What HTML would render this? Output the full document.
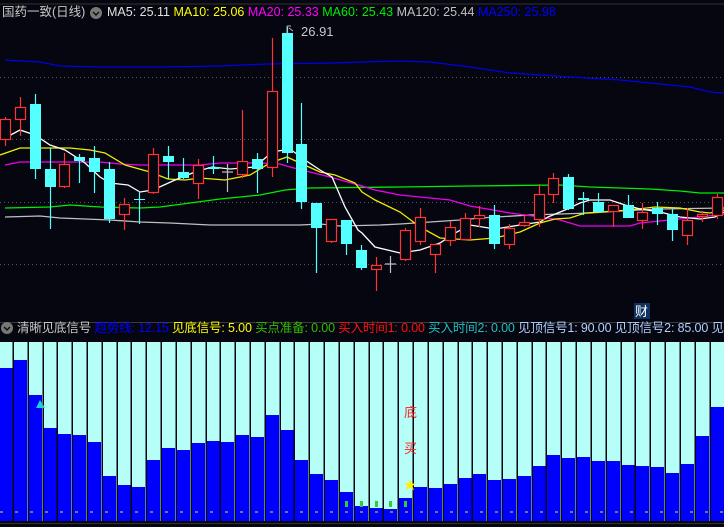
<!DOCTYPE html>
<html><head><meta charset="utf-8"><style>
html,body{margin:0;padding:0;background:#05060f;width:724px;height:527px;overflow:hidden;font-family:"Liberation Sans","Noto Sans CJK SC",sans-serif;}
.w{position:absolute;left:0;top:0;width:724px;height:527px;overflow:hidden;}
.t{position:absolute;font-size:12.5px;white-space:nowrap;line-height:15px;}
</style></head><body>
<div class="w">
<svg width="724" height="527" style="position:absolute;left:0;top:0" xmlns="http://www.w3.org/2000/svg">
<rect width="724" height="527" fill="#05060f"/>
<line x1="0" y1="4" x2="724" y2="4" stroke="#333" stroke-width="1"/>
<g stroke="#555" stroke-dasharray="1,3"><line x1="0" y1="77.5" x2="724" y2="77.5"/><line x1="0" y1="139.5" x2="724" y2="139.5"/><line x1="0" y1="202.5" x2="724" y2="202.5"/><line x1="0" y1="264.5" x2="724" y2="264.5"/></g>
<g fill="none" stroke-width="1.3">
<polyline stroke="#0000ee" points="5,60 40,62 60,66 100,67 160,67 220,66 267,64 333,63 362,62 400,61 430,62 470,67 510,73 570,77 620,80 650,83 690,87 710,92 724,93"/>
<polyline stroke="#c0c0c0" points="5,217 40,216 60,218 110,220 140,222 170,223 210,225 300,225 320,224 340,226 380,225 400,224 430,222 460,220 480,218 530,215 590,213 620,211 660,209 724,208"/>
<polyline stroke="#00ee00" points="5,208 50,207 70,205 100,207 140,208 160,207 190,203 220,199 260,195 285,190 310,188 400,187 470,186 560,185 590,187 620,188 650,189 680,191 700,193 724,193"/>
<polyline stroke="#ee00ee" points="5,165 20,162 100,162 120,164 140,165 200,165 220,163 260,163 280,164 290,167 310,172 330,177 362,186 375,190 400,195 450,200 470,206 510,213 540,217 560,220 580,226 630,226 640,223 670,220 700,217 724,214"/>
<polyline stroke="#eeee00" points="0,155 20,148 70,148 90,150 105,153 125,165 150,172 168,179 185,180 200,178 225,180 250,175 270,163 287,157 300,163 320,172 335,175 355,183 362,192 375,200 400,212 420,227 440,238 470,240 495,238 520,232 540,223 555,219 570,218 585,213 600,212 630,210 655,207 680,208 700,212 710,213 724,210"/>
<polyline stroke="#ffffff" points="5,138 20,130 35,135 50,145 65,150 85,163 100,177 110,183 128,185 140,192 153,190 175,180 195,172 212,167 230,169 255,167 272,152 290,149 305,160 320,170 332,177 345,207 358,230 362,233 375,247 400,253 420,250 440,243 455,233 470,225 495,229 520,225 540,222 548,217 565,210 580,203 590,200 610,200 625,205 640,209 660,212 680,217 700,219 715,217 724,212"/>
</g>
<g id="c" stroke-width="1.2"></g>
<rect x="0" y="322" width="724" height="1" fill="#3a3a3a"/>
<rect x="0" y="342" width="724" height="180" fill="#b6fff8"/>
<g id="b" fill="#0000ff"></g>
<rect x="0" y="521" width="724" height="6" fill="#05060f"/>
<line x1="0" y1="523.5" x2="724" y2="523.5" stroke="#333"/>
<polygon points="40,400 36,408 45,408" fill="#20d0d0"/>
<polygon points="410,479 411.5,483.5 416,483.5 412.5,486 414,490.5 410,487.5 406,490.5 407.5,486 404,483.5 408.5,483.5" fill="#ffee00"/>
<text x="404" y="417" fill="#ff2020" font-size="13" font-family="Noto Sans CJK SC,sans-serif">底</text>
<text x="404" y="453" fill="#ff2020" font-size="13" font-family="Noto Sans CJK SC,sans-serif">买</text>
<rect x="634" y="303" width="16" height="16" fill="#103060"/>
<text x="635" y="316" fill="#ffffff" font-size="13" font-family="Noto Sans CJK SC,sans-serif">财</text>
<circle cx="96" cy="13" r="6" fill="#777"/><path d="M93,12 L96,15 L99,12" stroke="#111" fill="none" stroke-width="1.5"/>
<circle cx="7" cy="328" r="6" fill="#777"/><path d="M4,327 L7,330 L10,327" stroke="#111" fill="none" stroke-width="1.5"/>
<path d="M287,34 V26 M287,26 h4 M289,28 l4,3" stroke="#bbb" fill="none"/>
<text x="301" y="36" fill="#c8c8c8" font-size="13" font-family="Liberation Sans,sans-serif">26.91</text>
</svg>
<script>
var C=[[5,'r',119,139,117,146],[20,'r',107,119,97,136],[35,'c',104,169,94,179],[50,'c',169,187,148,229],[64,'r',164,186,153,188],[79,'c',157,161,154,183],[94,'c',158,172,146,193],[109,'c',169,219,162,223],[124,'r',204,214,198,230],[139,'c',199,200,191,224],[153,'r',154,192,148,194],[168,'c',156,162,146,179],[183,'c',172,178,158,179],[198,'r',165,183,159,199],[213,'c',167,169,156,174],[227,'g',172,173,164,192],[242,'r',161,174,110,178],[257,'c',159,169,153,193],[272,'r',91,167,38,177],[287,'c',33,153,27,163],[301,'c',144,202,103,209],[316,'c',203,228,203,273],[331,'r',219,241,219,243],[346,'c',220,244,220,255],[361,'c',250,268,245,270],[376,'r',265,269,257,291],[390,'g',264,265,256,273],[405,'r',230,259,228,261],[420,'r',217,241,208,245],[435,'r',244,254,244,273],[450,'r',227,240,221,246],[465,'r',218,239,213,239],[479,'r',215,218,206,227],[494,'c',215,244,205,249],[509,'r',228,244,224,249],[524,'r',222,225,214,227],[539,'r',194,219,184,227],[553,'r',178,194,173,203],[568,'c',177,209,174,210],[583,'c',198,200,192,215],[598,'c',202,212,193,212],[613,'r',205,211,205,227],[628,'c',205,218,195,218],[642,'r',212,220,203,229],[657,'c',208,214,202,225],[672,'c',214,230,209,241],[687,'r',220,235,208,245],[702,'r',214,216,211,222],[717,'r',197,215,194,219]];
var s='';C.forEach(function(k){var x=k[0],col=k[1]=='r'?'#ff3333':k[1]=='c'?'#54ffff':'#c0c0c0';
s+='<line x1="'+(x+.5)+'" y1="'+k[4]+'" x2="'+(x+.5)+'" y2="'+k[5]+'" stroke="'+col+'"/>';
if(k[1]=='r')s+='<rect x="'+(x-4.5)+'" y="'+(k[2]+.5)+'" width="10" height="'+Math.max(1,k[3]-k[2])+'" fill="#05060f" stroke="'+col+'"/>';
else if(k[1]=='c')s+='<rect x="'+(x-5)+'" y="'+k[2]+'" width="11" height="'+Math.max(1,k[3]-k[2])+'" fill="'+col+'"/>';
else s+='<line x1="'+(x-5)+'" y1="'+k[2]+'" x2="'+(x+6)+'" y2="'+k[2]+'" stroke="'+col+'"/>';});
document.getElementById('c').innerHTML=s;
var T=[368,360,395,428,434,435,442,476,485,487,460,448,450,443,441,442,435,437,415,430,460,474,480,492,506,508,509,498,487,488,484,478,474,480,479,476,466,455,458,457,461,461,465,466,467,473,464,436,407];
var X=[0,14,29,44,58,73,88,103,118,132,147,162,177,192,207,221,236,251,266,281,295,310,325,340,355,370,384,399,414,429,444,459,473,488,503,518,533,547,562,577,592,607,622,636,651,666,681,696,711];
var b='';X.forEach(function(x,i){b+='<rect x="'+x+'" y="'+T[i]+'" width="13" height="'+(521-T[i])+'"/>';});
for(var i=1;i<X.length;i++){b+='<rect x="'+(X[i]-1.5)+'" y="342" width="1.5" height="179" fill="#05060f"/>';}
b+='<line x1="0" y1="512" x2="724" y2="512" stroke="#eeee00" stroke-dasharray="3,12"/>';
[340,355,370,384,399].forEach(function(x){b+='<rect x="'+(x+5)+'" y="501" width="3" height="6" fill="#33cc33"/>';});
document.getElementById('b').innerHTML=b;
</script>
<div class="t" style="left:2px;top:5px;color:#c8c8c8">国药一致(日线)</div>
<div class="t" style="left:107px;top:5px"><span style="color:#e0e0e0">MA5: 25.11</span> <span style="color:#ffff00">MA10: 25.06</span> <span style="color:#ff00ff">MA20: 25.33</span> <span style="color:#00ee00">MA60: 25.43</span> <span style="color:#c0c0c0">MA120: 25.44</span> <span style="color:#0000ff">MA250: 25.98</span></div>
<div class="t" style="left:17px;top:321px;letter-spacing:-0.15px"><span style="color:#c8c8c8">清晰见底信号</span> <span style="color:#0000ff">趋势线: 12.15</span> <span style="color:#ffff00">见底信号: 5.00</span> <span style="color:#33bb00">买点准备: 0.00</span> <span style="color:#ff1010">买入时间1: 0.00</span> <span style="color:#20c0c0">买入时间2: 0.00</span> <span style="color:#b0d0ff">见顶信号1: 90.00</span> <span style="color:#b0d0ff">见顶信号2: 85.00</span> <span style="color:#b0d0ff">见</span></div>
</div>
</body></html>
